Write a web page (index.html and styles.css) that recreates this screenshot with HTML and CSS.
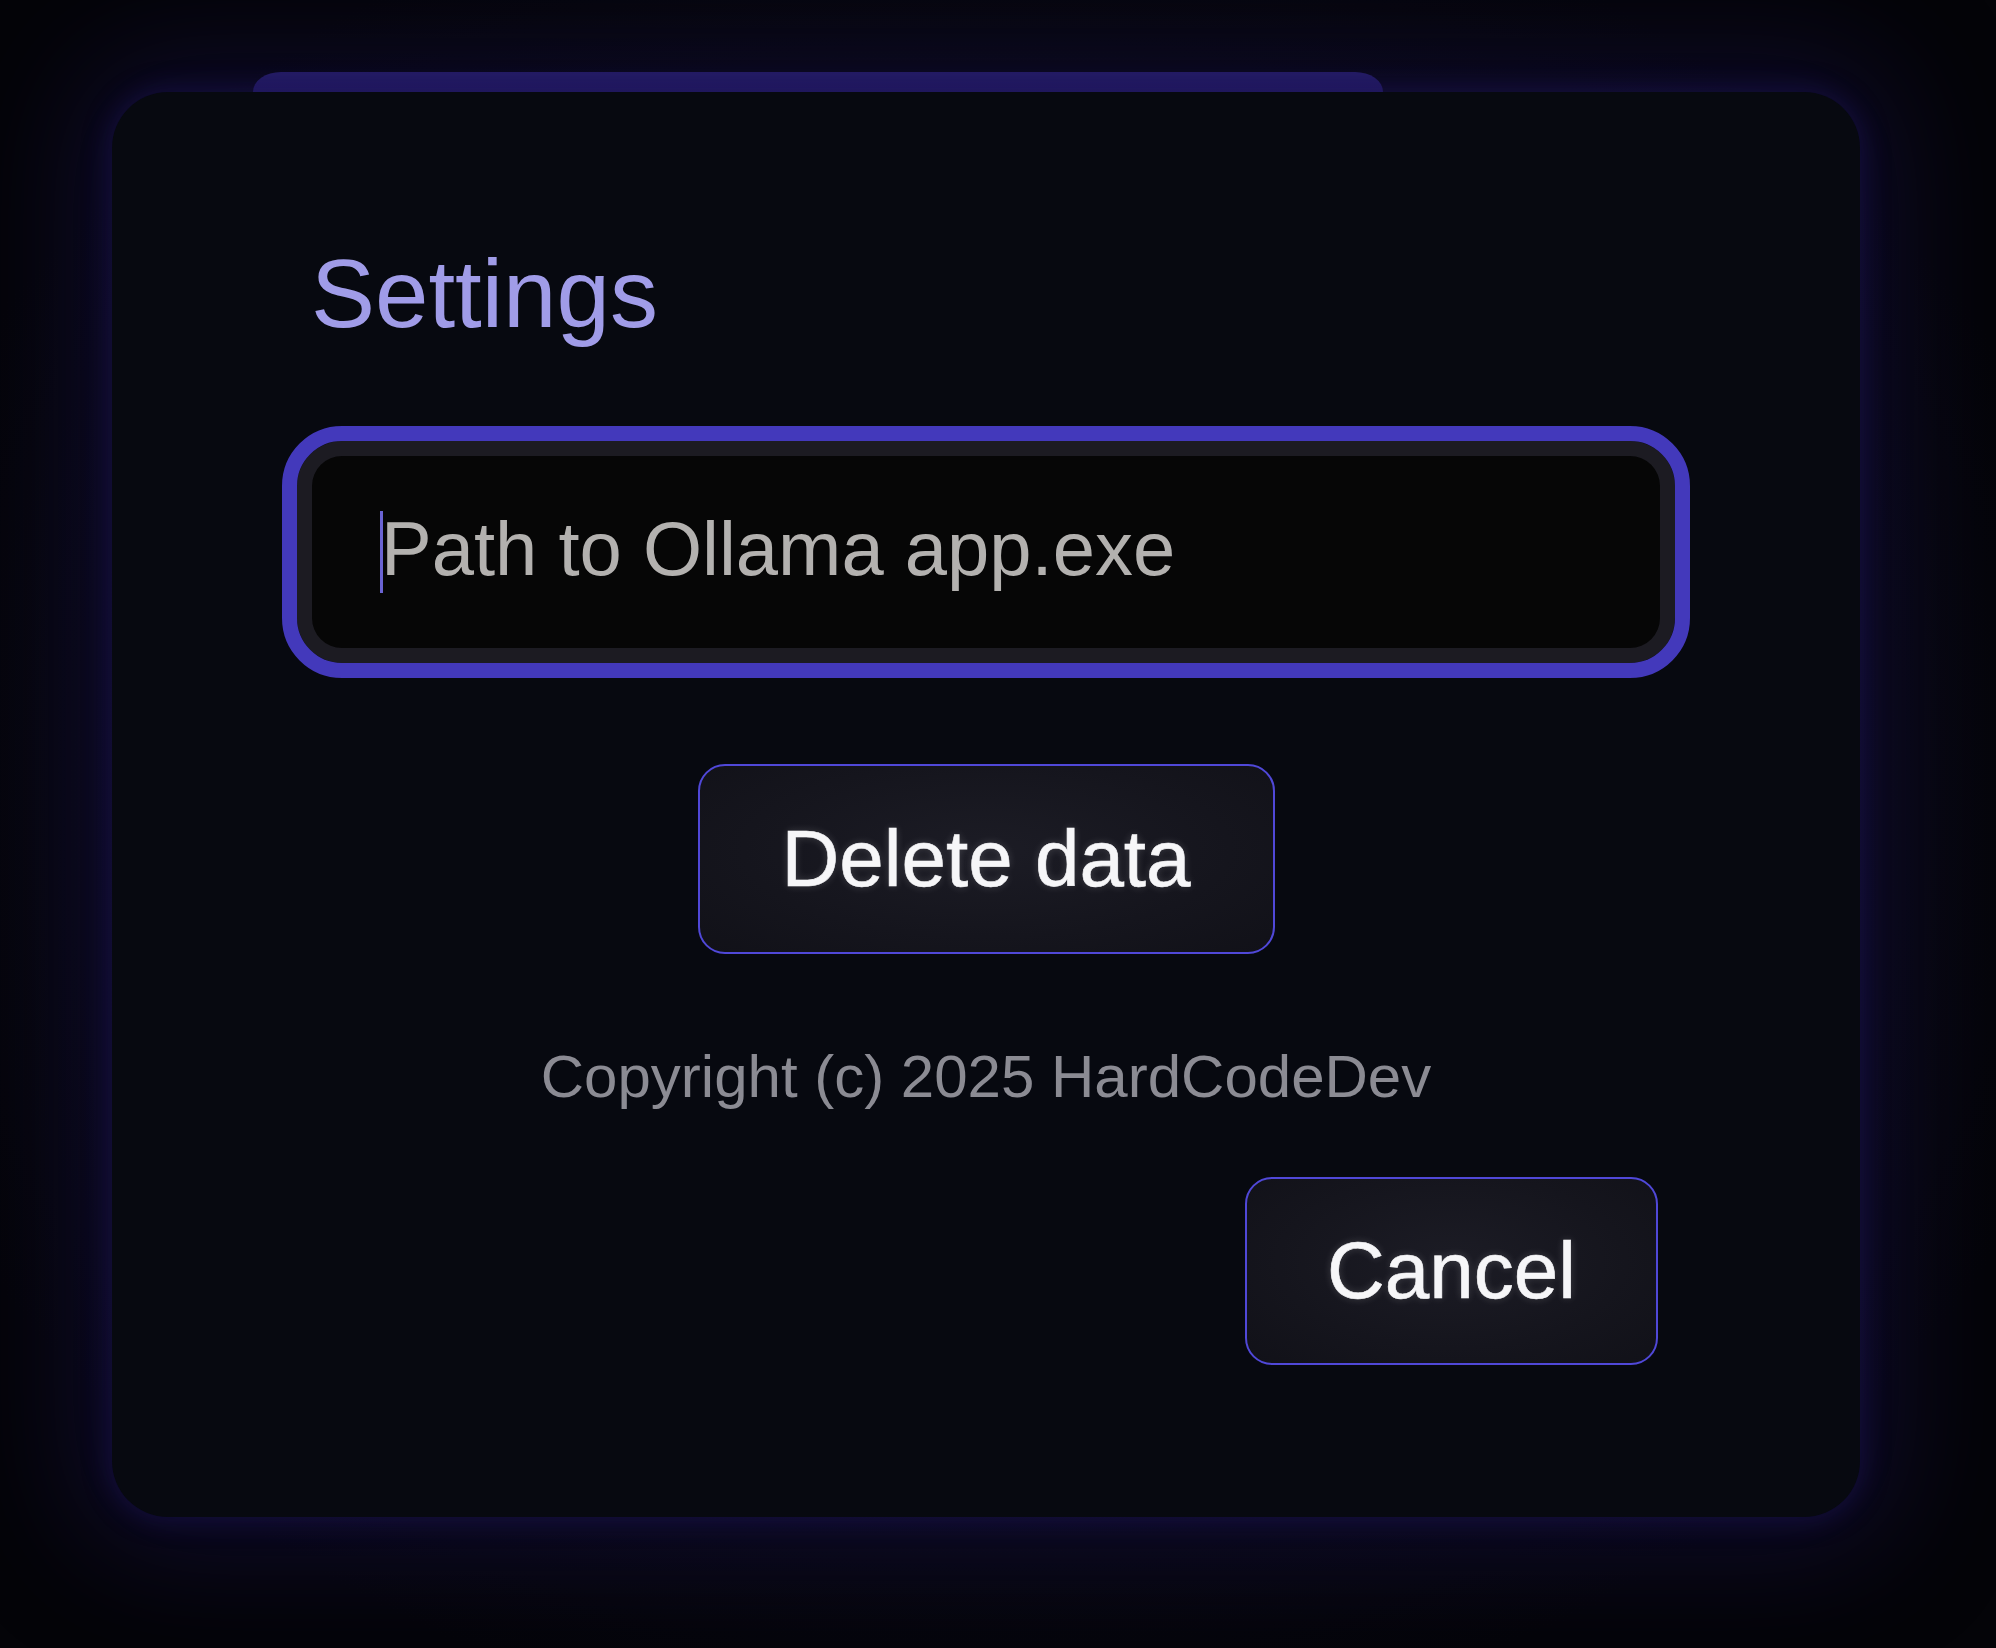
FILE: index.html
```html
<!DOCTYPE html>
<html lang="en">
<head>
<meta charset="utf-8">
<title>Settings</title>
<link rel="stylesheet" href="styles.css">
</head>
<body>
<div class="stage">
  <div class="dialog">
    <div class="tab"></div>
    <div class="card">
      <h1 class="title">Settings</h1>
      <div class="field">
        <span class="caret"></span><span class="placeholder">Path to Ollama app.exe</span>
      </div>
      <button class="btn btn-delete">Delete data</button>
      <p class="copyright">Copyright (c) 2025 HardCodeDev</p>
      <button class="btn btn-cancel">Cancel</button>
    </div>
  </div>
</div>
</body>
</html>
```

FILE: styles.css
```css
html, body {
  margin: 0;
  padding: 0;
}

body {
  width: 1996px;
  height: 1648px;
  overflow: hidden;
  background: radial-gradient(ellipse 1150px 950px at 986px 800px, #0a0918 0%, #07070f 70%, #040408 100%);
  font-family: "Liberation Sans", Arial, Helvetica, sans-serif;
}

.stage {
  padding: 72px 0 0 112px;
}

.dialog {
  width: 1748px;
  display: flex;
  flex-direction: column;
}

.tab {
  margin-left: 141px;
  width: 1130px;
  height: 20px;
  background: linear-gradient(180deg, #2b2274 0%, #261d68 100%);
  border-radius: 28px 28px 0 0 / 20px 20px 0 0;
}

.card {
  box-sizing: border-box;
  height: 1425px;
  background: #070910;
  border-radius: 56px;
  padding: 147px 170px 0 170px;
  display: flex;
  flex-direction: column;
  box-shadow:
    0 0 26px 4px rgba(36, 26, 104, 0.4),
    0 0 110px 40px rgba(22, 16, 70, 0.5);
}

.title {
  margin: 0 0 78px 29px;
  font-size: 96px;
  line-height: 109px;
  font-weight: 400;
  color: #a09ce8;
}

.field {
  box-sizing: border-box;
  height: 252px;
  border: 15px solid #4339bb;
  border-radius: 60px;
  background: #060606;
  box-shadow: inset 0 0 0 15px #1c1b22;
  display: flex;
  align-items: center;
  padding-left: 83px;
}

.caret {
  display: inline-block;
  width: 3px;
  height: 82px;
  background: #6a63d2;
  margin-right: -2px;
  position: relative;
  z-index: 1;
}

.placeholder {
  font-size: 76px;
  line-height: 86px;
  color: #b3b1af;
  position: relative;
  top: -3px;
}

.btn {
  box-sizing: border-box;
  border: 2.5px solid #5048d8;
  border-radius: 27px;
  background: radial-gradient(ellipse at 50% 45%, #1c1c25 0%, #15151d 60%, #111118 100%);
  color: #f6f6f8;
  font-family: "Liberation Sans", Arial, Helvetica, sans-serif;
  font-size: 80px;
  -webkit-text-stroke: 0.6px #f6f6f8;
  text-shadow: 0 0 8px rgba(255, 255, 255, 0.18);
  padding: 0;
  cursor: pointer;
  display: flex;
  align-items: center;
  justify-content: center;
}

.btn-delete {
  align-self: center;
  width: 577px;
  height: 190px;
  margin-top: 86px;
}

.btn-cancel {
  align-self: flex-end;
  width: 413px;
  height: 188px;
  margin-top: 64px;
  margin-right: 32px;
}

.copyright {
  margin: 87px 0 0 0;
  text-align: center;
  font-size: 60px;
  line-height: 72px;
  color: #8b8b93;
}
```
